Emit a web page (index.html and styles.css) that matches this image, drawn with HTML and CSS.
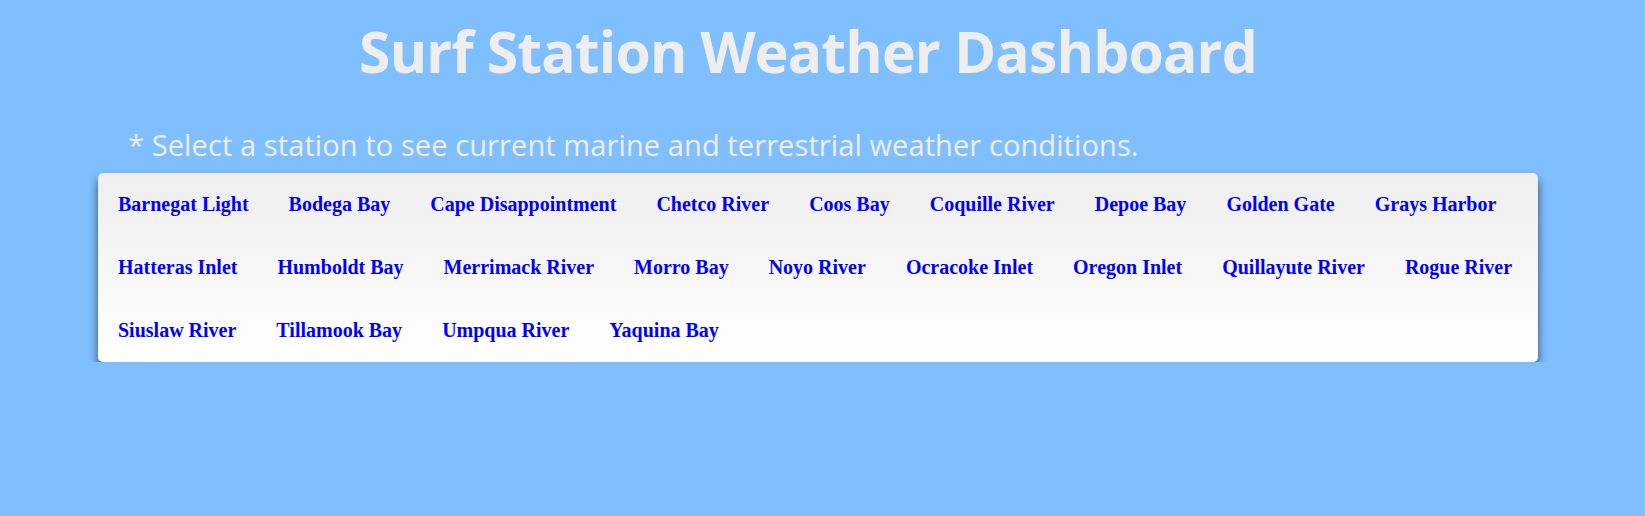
FILE: index.html
```html
<!DOCTYPE html>
<html>
<head>
<meta charset="utf-8">
<title>Surf Station Weather Dashboard</title>
<link rel="stylesheet" href="styles.css">
</head>
<body>
<div class="page">
  <h1 class="title">Surf Station Weather Dashboard</h1>
  <p class="hint">* Select a station to see current marine and terrestrial weather conditions.</p>
  <nav class="stations">
    <a href="#">Barnegat Light</a>
    <a href="#">Bodega Bay</a>
    <a href="#">Cape Disappointment</a>
    <a href="#">Chetco River</a>
    <a href="#">Coos Bay</a>
    <a href="#">Coquille River</a>
    <a href="#">Depoe Bay</a>
    <a href="#">Golden Gate</a>
    <a href="#">Grays Harbor</a>
    <a href="#">Hatteras Inlet</a>
    <a href="#">Humboldt Bay</a>
    <a href="#">Merrimack River</a>
    <a href="#">Morro Bay</a>
    <a href="#">Noyo River</a>
    <a href="#">Ocracoke Inlet</a>
    <a href="#">Oregon Inlet</a>
    <a href="#">Quillayute River</a>
    <a href="#">Rogue River</a>
    <a href="#">Siuslaw River</a>
    <a href="#">Tillamook Bay</a>
    <a href="#">Umpqua River</a>
    <a href="#">Yaquina Bay</a>
  </nav>
</div>
</body>
</html>
```
FILE: styles.css
```css
html, body {
  margin: 0;
  padding: 0;
  background: #80bfff;
}
.page {
  width: 1440px;
  margin-left: 98px;
  font-family: "Open Sans", "DejaVu Sans", sans-serif;
  color: #eeeeee;
}
.title {
  margin: 0;
  padding: 19px 20px 0 0;
  height: 64px;
  text-align: center;
  font-size: 57px;
  line-height: 64px;
  font-weight: 700;
  letter-spacing: -0.8px;
}
.hint {
  margin: 0 0 8px 0;
  padding: 42px 0 0 30px;
  font-size: 29px;
  line-height: 40px;
  letter-spacing: 0.1px;
}
.stations {
  display: flex;
  flex-wrap: wrap;
  background: linear-gradient(to bottom, #eeeeee, #ffffff);
  border-radius: 5px;
  box-shadow: 0 6px 10px rgba(0, 0, 0, 0.6);
}
.stations a {
  display: block;
  padding: 20px;
  font-family: "Liberation Serif", "Times New Roman", serif;
  font-weight: 700;
  font-size: 20px;
  line-height: 23px;
  color: #0000ff;
  text-decoration: none;
}
```
